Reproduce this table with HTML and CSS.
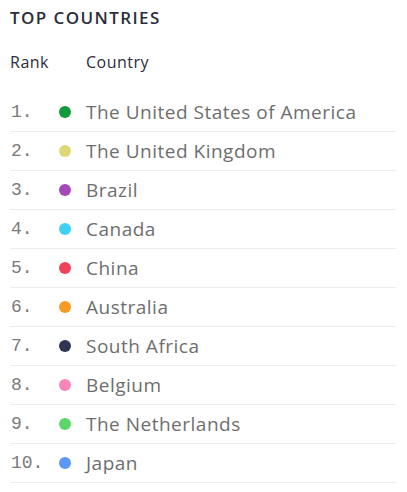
FILE: index.html
```html
<!DOCTYPE html>
<html>
<head>
<meta charset="utf-8">
<link rel="stylesheet" href="styles.css">
</head>
<body>
<div class="panel">
  <h2 class="title">TOP COUNTRIES</h2>
  <div class="head">
    <span class="h-rank">Rank</span>
    <span class="h-country">Country</span>
  </div>
  <ul class="list">
    <li class="row"><span class="rank">1.</span><span class="dot" style="background:#0f9a3c"></span><span class="name">The United States of America</span></li>
    <li class="row"><span class="rank">2.</span><span class="dot" style="background:#dcd873"></span><span class="name">The United Kingdom</span></li>
    <li class="row"><span class="rank">3.</span><span class="dot" style="background:#a848b8"></span><span class="name">Brazil</span></li>
    <li class="row"><span class="rank">4.</span><span class="dot" style="background:#3fd0f5"></span><span class="name">Canada</span></li>
    <li class="row"><span class="rank">5.</span><span class="dot" style="background:#f2415a"></span><span class="name">China</span></li>
    <li class="row"><span class="rank">6.</span><span class="dot" style="background:#f89a26"></span><span class="name">Australia</span></li>
    <li class="row"><span class="rank">7.</span><span class="dot" style="background:#2e3554"></span><span class="name">South Africa</span></li>
    <li class="row"><span class="rank">8.</span><span class="dot" style="background:#f884b8"></span><span class="name">Belgium</span></li>
    <li class="row"><span class="rank">9.</span><span class="dot" style="background:#5ad66a"></span><span class="name">The Netherlands</span></li>
    <li class="row"><span class="rank">10.</span><span class="dot" style="background:#5b97f5"></span><span class="name">Japan</span></li>
  </ul>
</div>
</body>
</html>
```

FILE: styles.css
```css
html, body {
  margin: 0;
  padding: 0;
  background: #ffffff;
}
.panel {
  padding: 6px 11px 0 10px;
  font-family: "Open Sans", "Lato", sans-serif;
}
.title {
  margin: 0;
  font-size: 17px;
  font-weight: 600;
  letter-spacing: 1.4px;
  color: #2b2e3a;
  line-height: 24px;
}
.head {
  display: flex;
  margin-top: 20px;
  font-size: 16px;
  letter-spacing: 0.5px;
  color: #2b2e3a;
  line-height: 24px;
}
.h-rank {
  width: 76px;
}
.list {
  list-style: none;
  margin: 19px 0 0 0;
  padding: 0;
}
.row {
  display: flex;
  align-items: center;
  height: 38px;
  border-bottom: 1px solid #ececec;
}
.rank {
  width: 48px;
  padding-left: 1px;
  font-family: "Liberation Mono", monospace;
  font-size: 18px;
  color: #7a7a7a;
}
.dot {
  width: 12px;
  height: 12px;
  border-radius: 50%;
  flex: none;
}
.name {
  margin-left: 15px;
  font-size: 19px;
  letter-spacing: 0.5px;
  color: #6e6e6e;
}
```
